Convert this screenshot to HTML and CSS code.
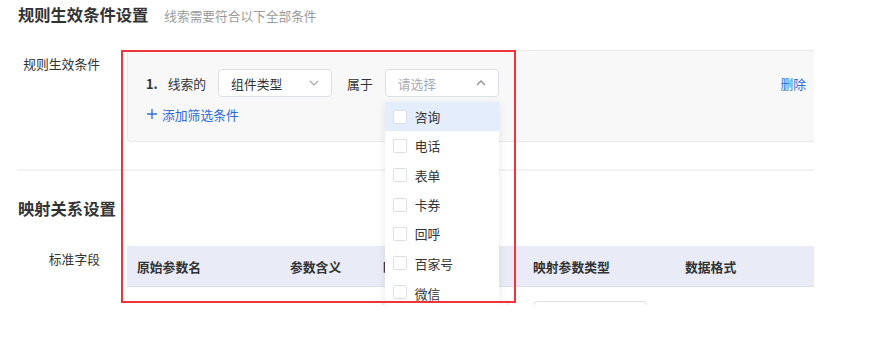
FILE: index.html
```html
<!DOCTYPE html>
<html lang="zh-CN">
<head>
<meta charset="utf-8">
<link rel="stylesheet" href="styles.css">
</head>
<body>
<div class="page">
  <div class="head">
    <span class="head-title">规则生效条件设置</span>
    <span class="head-sub">线索需要符合以下全部条件</span>
  </div>

  <div class="row rule-row">
    <div class="label">规则生效条件</div>
    <div class="panel">
      <div class="cond">
        <span class="idx">1.</span>
        <span class="word">线索的</span>
        <div class="select">
          <span class="val">组件类型</span>
          <svg class="chev" width="10" height="6" viewBox="0 0 10 6"><path d="M1 1l4 4 4-4" fill="none" stroke="#a3a6ad" stroke-width="1.2"/></svg>
        </div>
        <span class="word">属于</span>
        <div class="select open">
          <span class="val ph">请选择</span>
          <svg class="chev" width="10" height="6" viewBox="0 0 10 6"><path d="M1 5l4-4 4 4" fill="none" stroke="#8d9096" stroke-width="1.3"/></svg>
          <ul class="dropdown">
            <li class="opt hover"><span class="cb"></span>咨询</li>
            <li class="opt"><span class="cb"></span>电话</li>
            <li class="opt"><span class="cb"></span>表单</li>
            <li class="opt"><span class="cb"></span>卡券</li>
            <li class="opt"><span class="cb"></span>回呼</li>
            <li class="opt"><span class="cb"></span>百家号</li>
            <li class="opt"><span class="cb"></span>微信</li>
          </ul>
        </div>
        <a class="del">删除</a>
      </div>
      <a class="add"><svg width="10" height="10" viewBox="0 0 10 10"><path d="M5 0v10M0 5h10" stroke="#2f6bd6" stroke-width="1.3"/></svg><span>添加筛选条件</span></a>
    </div>
  </div>

  <div class="sep"></div>

  <div class="head2">映射关系设置</div>

  <div class="row map-row">
    <div class="label label2">标准字段</div>
    <div class="table">
      <div class="thead">
        <div class="c c1">原始参数名</div>
        <div class="c c2">参数含义</div>
        <div class="c c3">映射参数名</div>
        <div class="c c4">映射参数类型</div>
        <div class="c c5">数据格式</div>
      </div>
      <div class="tbody">
        <div class="c c1"></div>
        <div class="c c2"></div>
        <div class="c c3"><div class="inp"></div></div>
        <div class="c c4"><div class="inp"></div></div>
        <div class="c c5"></div>
      </div>
    </div>
  </div>

  <div class="redbox"></div>
</div>
</body>
</html>
```

FILE: styles.css
```css
* { box-sizing: border-box; }
html, body { margin: 0; padding: 0; background: #fff; }
body {
  font-family: "Noto Sans CJK SC", "Noto Sans", sans-serif;
  font-size: 12.8px;
  color: #333;
}
.page {
  position: relative;
  width: 814px;
  height: 305px;
  overflow: hidden;
}
.head {
  display: flex;
  align-items: baseline;
  padding-left: 18px;
  height: 28px;
  line-height: 28px;
}
.head-title {
  font-size: 16.3px;
  font-weight: 700;
  color: #333;
}
.head-sub {
  margin-left: 16px;
  font-size: 12.7px;
  color: #9a9a9a;
}
.row { display: flex; }
.rule-row { margin-top: 22px; }
.label {
  width: 100px;
  flex-shrink: 0;
  margin-right: 27px;
  text-align: right;
  line-height: 20px;
  padding-top: 4px;
  color: #333;
}
.panel {
  flex: 1;
  background: #f8f8f8;
  border: 1px solid #e8e8e8;
  border-right: none;
  border-radius: 4px 0 0 4px;
  padding: 18px 8px 17px 18px;
}
.cond {
  display: flex;
  align-items: center;
  height: 28px;
}
.idx { font-weight: 700; margin-right: 10px; }
.word { margin-right: 12px; }
.select {
  position: relative;
  width: 114px;
  height: 28px;
  background: #fff;
  border: 1px solid #dcdfe6;
  border-radius: 4px;
  display: flex;
  align-items: center;
  justify-content: space-between;
  padding: 0 12px 0 12px;
  margin-right: 15px;
}
.val { color: #333; }
.val.ph { color: #a8abb2; }
.chev { display: block; }
.dropdown {
  position: absolute;
  left: -1px;
  top: 32px;
  width: 114px;
  margin: 0;
  padding: 0;
  list-style: none;
  background: #fff;
  box-shadow: 0 2px 10px rgba(0, 0, 0, 0.09);
  border-radius: 2px;
  z-index: 5;
}
.opt {
  height: 29.3px;
  display: flex;
  align-items: center;
  padding-left: 8px;
  color: #333;
}
.opt:last-child { height: 33px; align-items: flex-start; padding-top: 6px; }
.opt.hover { background: #e3edfb; }
.cb {
  width: 14px;
  height: 14px;
  border: 1px solid #dcdfe6;
  border-radius: 2px;
  background: #fff;
  margin-right: 8px;
}
.opt:last-child .cb { margin-top: 1px; }
.del {
  margin-left: auto;
  color: #2f6bd6;
  cursor: pointer;
}
.add {
  display: flex;
  align-items: center;
  margin-top: 7px;
  height: 20px;
  color: #2f6bd6;
  padding-left: 1px;
}
.add svg { margin-right: 5px; }
.sep {
  margin: 27px 0 0 17px;
  height: 2px;
  background: #f2f2f2;
}
.head2 {
  margin-top: 23px;
  padding-left: 18px;
  height: 28px;
  line-height: 28px;
  font-size: 16.3px;
  font-weight: 700;
}
.map-row { margin-top: 24px; }
.label2 { padding-top: 3px; }
.table { flex: 1; }
.thead {
  display: flex;
  height: 41px;
  align-items: center;
  background: #e9ecf6;
  border-bottom: 1px solid #dce0ea;
  font-weight: 600;
  color: #333;
}
.c { padding-left: 10px; flex-shrink: 0; }
.c1 { width: 153px; }
.c2 { width: 93px; }
.c3 { width: 150px; }
.c4 { width: 152px; }
.c5 { flex: 1; }
.tbody {
  display: flex;
  padding-top: 14px;
}
.c3 .inp { width: 125px; }
.inp {
  width: 114px;
  height: 28px;
  border: 1px solid #dcdfe6;
  border-radius: 4px;
  background: #fff;
}
.redbox {
  position: absolute;
  left: 121px;
  top: 50px;
  width: 395px;
  height: 253px;
  border: 2px solid #f0343c;
  z-index: 10;
}
```
